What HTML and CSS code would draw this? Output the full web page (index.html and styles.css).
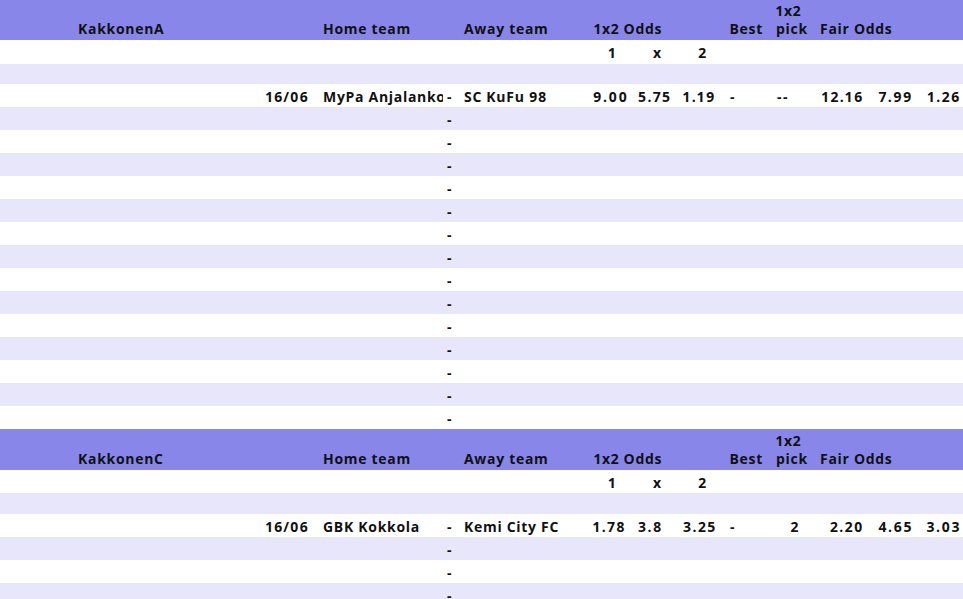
FILE: index.html
```html
<!DOCTYPE html>
<html>
<head>
<meta charset="utf-8">
<link rel="stylesheet" href="styles.css">
</head>
<body>
<section class="league">
  <div class="row head">
    <div class="c league-name">KakkonenA</div>
    <div class="c home">Home team</div>
    <div class="c"></div>
    <div class="c away">Away team</div>
    <div class="c span3 odds-title">1x2 Odds</div>
    <div class="c best-title">Best</div>
    <div class="c pick-title">1x2<br>pick</div>
    <div class="c span3 fair-title">Fair Odds</div>
  </div>
  <div class="row sub tall">
    <div class="c"></div><div class="c"></div><div class="c"></div><div class="c"></div>
    <div class="c mid">1</div><div class="c mid">x</div><div class="c mid">2</div>
  </div>
  <div class="row alt short"></div>
  <div class="row">
    <div class="c date">16/06</div>
    <div class="c home">MyPa Anjalankoski</div>
    <div class="c dash">-</div>
    <div class="c away">SC KuFu 98</div>
    <div class="c num">9.00</div>
    <div class="c num">5.75</div>
    <div class="c num">1.19</div>
    <div class="c best">-</div>
    <div class="c pick">--</div>
    <div class="c fair">12.16</div>
    <div class="c fair">7.99</div>
    <div class="c fair">1.26</div>
  </div>
  <div class="row alt"><div class="c"></div><div class="c"></div><div class="c dash">-</div></div>
  <div class="row"><div class="c"></div><div class="c"></div><div class="c dash">-</div></div>
  <div class="row alt"><div class="c"></div><div class="c"></div><div class="c dash">-</div></div>
  <div class="row"><div class="c"></div><div class="c"></div><div class="c dash">-</div></div>
  <div class="row alt"><div class="c"></div><div class="c"></div><div class="c dash">-</div></div>
  <div class="row"><div class="c"></div><div class="c"></div><div class="c dash">-</div></div>
  <div class="row alt"><div class="c"></div><div class="c"></div><div class="c dash">-</div></div>
  <div class="row"><div class="c"></div><div class="c"></div><div class="c dash">-</div></div>
  <div class="row alt"><div class="c"></div><div class="c"></div><div class="c dash">-</div></div>
  <div class="row"><div class="c"></div><div class="c"></div><div class="c dash">-</div></div>
  <div class="row alt"><div class="c"></div><div class="c"></div><div class="c dash">-</div></div>
  <div class="row"><div class="c"></div><div class="c"></div><div class="c dash">-</div></div>
  <div class="row alt"><div class="c"></div><div class="c"></div><div class="c dash">-</div></div>
  <div class="row"><div class="c"></div><div class="c"></div><div class="c dash">-</div></div>
</section>
<section class="league">
  <div class="row head taller">
    <div class="c league-name">KakkonenC</div>
    <div class="c home">Home team</div>
    <div class="c"></div>
    <div class="c away">Away team</div>
    <div class="c span3 odds-title">1x2 Odds</div>
    <div class="c best-title">Best</div>
    <div class="c pick-title">1x2<br>pick</div>
    <div class="c span3 fair-title">Fair Odds</div>
  </div>
  <div class="row sub">
    <div class="c"></div><div class="c"></div><div class="c"></div><div class="c"></div>
    <div class="c mid">1</div><div class="c mid">x</div><div class="c mid">2</div>
  </div>
  <div class="row alt shortish"></div>
  <div class="row">
    <div class="c date">16/06</div>
    <div class="c home">GBK Kokkola</div>
    <div class="c dash">-</div>
    <div class="c away">Kemi City FC</div>
    <div class="c num">1.78</div>
    <div class="c num">3.8</div>
    <div class="c num">3.25</div>
    <div class="c best">-</div>
    <div class="c pick-num">2</div>
    <div class="c fair">2.20</div>
    <div class="c fair">4.65</div>
    <div class="c fair">3.03</div>
  </div>
  <div class="row alt"><div class="c"></div><div class="c"></div><div class="c dash">-</div></div>
  <div class="row"><div class="c"></div><div class="c"></div><div class="c dash">-</div></div>
  <div class="row alt"><div class="c"></div><div class="c"></div><div class="c dash">-</div></div>
</section>
</body>
</html>
```
FILE: styles.css
```css
html, body {
  margin: 0;
  padding: 0;
  overflow: hidden;
  height: 100%;
  background: #ffffff;
}
body {
  font-family: "Open Sans", "DejaVu Sans", sans-serif;
  font-weight: 700;
  font-size: 14px;
  letter-spacing: 0.7px;
  color: #111111;
  width: 963px;
  font-variant-numeric: proportional-nums;
}
.row {
  display: grid;
  grid-template-columns: 315px 128px 15px 132px 45px 45px 45px 45px 45px 51px 49px 48px;
  height: 23px;
  align-items: center;
  background: #ffffff;
}
.row.alt { background: #e7e6fa; }
.row.tall { height: 24px; }
.row.short { height: 20px; }
.row.shortish { height: 21px; }
.row.head {
  height: 40px;
  background: #8887e9;
  align-items: end;
}
.row.head.taller { height: 41px; }
.row.head .c { padding-bottom: 2px; }
.row:not(.head) .c { padding-top: 2px; }
.c {
  white-space: nowrap;
  overflow: hidden;
  line-height: 18px;
}
.league-name { padding-left: 78px; }
.home { padding-left: 8px; }
.away { padding-left: 6px; }
.span3 { grid-column: span 3; overflow: visible; }
.odds-title { padding-left: 4px; }
.best-title { text-align: right; padding-right: 7px; }
.pick-title { padding-left: 6px; overflow: visible; }
.fair-title { padding-left: 5px; }
.mid { text-align: center; }
.date { text-align: right; padding-right: 6px; letter-spacing: 1px; }
.dash { padding-left: 4px; overflow: visible; }
.num { padding-left: 3px; letter-spacing: 1.5px; }
.best { padding-left: 5px; }
.pick { padding-left: 7px; letter-spacing: 1.5px; }
.pick-num { text-align: right; padding-right: 16px; }
.fair { text-align: right; padding-right: 2px; letter-spacing: 1.5px; }
```
